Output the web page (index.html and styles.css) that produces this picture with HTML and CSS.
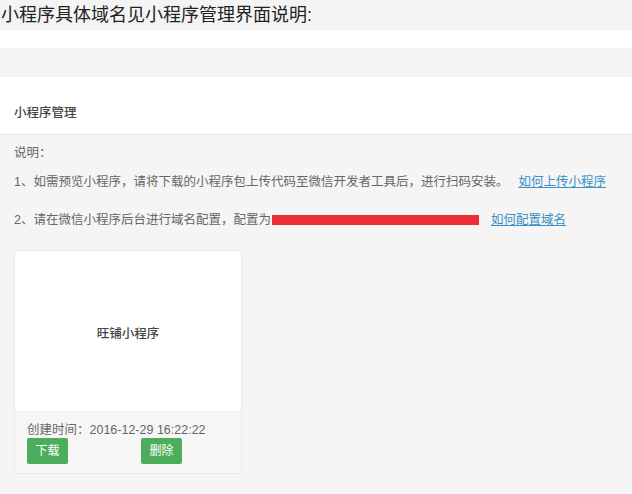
FILE: index.html
```html
<!DOCTYPE html>
<html lang="zh-CN">
<head>
    <meta charset="UTF-8">
    <title>小程序管理</title>
    <link rel="stylesheet" href="styles.css">
</head>
<body>
<div class="intro">小程序具体域名见小程序管理界面说明:</div>
<div class="gap"></div>
<div class="strip"></div>
<div class="panel-head">小程序管理</div>
<div class="panel-body">
    <p class="note">说明：</p>
    <p class="step step-one">1、如需预览小程序，请将下载的小程序包上传代码至微信开发者工具后，进行扫码安装。<a href="#" class="help">如何上传小程序</a></p>
    <p class="step step-two">2、请在微信小程序后台进行域名配置，配置为<span class="mask"></span><a href="#" class="help">如何配置域名</a></p>

    <div class="card">
        <div class="card-main">旺铺小程序</div>
        <div class="card-foot">
            <div class="time">创建时间：2016-12-29 16:22:22</div>
            <div class="actions">
                <span><a href="#" class="btn">下载</a></span>
                <span><a href="#" class="btn">删除</a></span>
            </div>
        </div>
    </div>
</div>
</body>
</html>
```

FILE: styles.css
```css
* {
    margin: 0;
    padding: 0;
    box-sizing: border-box;
}

html, body {
    height: 100%;
}

body {
    font-family: "Liberation Sans", "Noto Sans CJK SC", sans-serif;
    background-color: #f5f5f5;
    color: #555;
}

.intro {
    height: 30px;
    line-height: 31px;
    padding-left: 1px;
    font-size: 18px;
    color: #222;
    background-color: #f4f4f4;
}

.gap {
    height: 18px;
    background-color: #fff;
}

.strip {
    height: 29px;
    background-color: #f4f4f4;
}

.panel-head {
    height: 58px;
    padding: 27px 0 0 14px;
    line-height: 18px;
    font-size: 12.5px;
    font-weight: 500;
    color: #444;
    background-color: #fff;
    border-bottom: 1px solid #e6e6e6;
}

.panel-body {
    padding: 9px 14px 0;
    font-size: 12.5px;
}

.panel-body p {
    line-height: 18px;
    color: #666;
}

.step-one {
    margin-top: 11px;
}

.step-two {
    margin-top: 20px;
}

.help {
    color: #3a8fc6;
    text-decoration: underline;
    margin-left: 10px;
}

.step-two .help {
    margin-left: 12px;
}

.mask {
    display: inline-block;
    width: 207px;
    height: 10px;
    margin-left: 1px;
    vertical-align: -1px;
    background-color: #ee2e37;
}

.card {
    width: 228px;
    margin-top: 21px;
    border: 1px solid #ebebeb;
    background-color: #fff;
}

.card-main {
    height: 160px;
    display: flex;
    align-items: center;
    justify-content: center;
    padding-top: 2px;
    font-size: 12.5px;
    font-weight: 500;
    color: #444;
}

.card-foot {
    height: 62px;
    padding: 10px 12px 0;
    background-color: #f6f6f6;
    border-top: 1px solid #eee;
}

.time {
    line-height: 16px;
    font-size: 12.5px;
    color: #666;
}

.actions {
    display: grid;
    grid-template-columns: 114px 1fr;
}

.btn {
    display: inline-block;
    width: 41px;
    height: 26px;
    line-height: 26px;
    text-align: center;
    font-size: 12px;
    color: #fff;
    text-decoration: none;
    background-color: #4cae5a;
    border-radius: 2px;
}
```
